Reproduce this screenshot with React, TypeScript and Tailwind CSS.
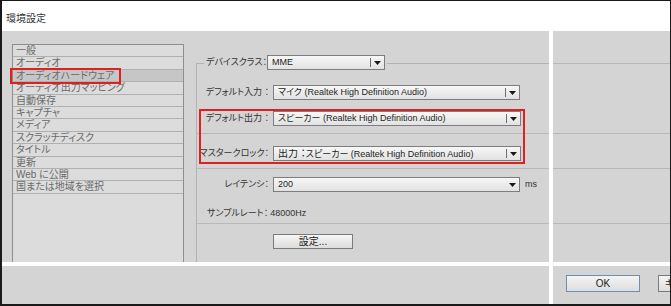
import React from "react";

const jp = "font-['Liberation_Sans','Noto_Sans_CJK_JP',sans-serif] [font-feature-settings:'palt']";

function Arrow() {
  return (
    <svg width="7" height="4" viewBox="0 0 7 4" className="block">
      <path d="M0 0 H7 L3.5 4 Z" fill="#1a1a1a" />
    </svg>
  );
}

function Dropdown({ text, w, divider = true }: { text: React.ReactNode; w: string; divider?: boolean }) {
  return (
    <div
      className={`${w} shrink-0 h-[15px] flex items-center border border-[#7d7d7d] bg-gradient-to-b from-[#f7f7f7] to-[#e2e2e2] text-[9px] leading-none text-[#1e1e1e] whitespace-nowrap overflow-hidden`}
    >
      <div className="flex-1 pl-[4px] overflow-hidden">{text}</div>
      {divider ? <div className="w-px h-[9px] bg-[#6e6e6e]" /> : null}
      <div className="w-[13px] flex items-center justify-center">
        <Arrow />
      </div>
    </div>
  );
}

function Label({ children }: { children: React.ReactNode }) {
  return (
    <div className="w-[76px] shrink-0 pr-[4px] text-right text-[9px] leading-none text-[#333] whitespace-nowrap">{children}</div>
  );
}

const items = [
  "一般",
  "オーディオ",
  "オーディオハードウェア",
  "オーディオ出力マッピング",
  "自動保存",
  "キャプチャ",
  "メディア",
  "スクラッチディスク",
  "タイトル",
  "更新",
  "Web に公開",
  "国または地域を選択",
];

export default function App() {
  return (
    <div className={`w-[671px] h-[306px] border-t border-l-2 border-r border-b-2 border-[#1a1a1a] bg-white flex flex-col overflow-hidden ${jp}`}>
      {/* title */}
      <div className="h-[30px] flex items-center pl-[4px] pt-[5px] text-[10px] text-[#333] leading-none">環境設定</div>

      {/* middle */}
      <div className="h-[231px] flex">
        <div className="w-[547px] bg-[#d4d4d4] flex pl-[10px] pt-[13px]">
          {/* list */}
          <div className="relative w-[172px] border border-b-0 border-[#8e8e8e] bg-[#dcdcdc]">
            {items.map((it, i) => (
              <div
                key={it}
                className={`h-[12.4px] border-b border-[#b0b0b0] pl-[3px] text-[10px] leading-[11px] text-[#6a6a6a] whitespace-nowrap overflow-hidden ${i === 2 ? "bg-[#c6c6c6]" : ""}`}
              >
                {it}
              </div>
            ))}
            <div className="absolute left-[-3px] top-[23px] w-[111px] h-[16px] border-2 border-[#e0201e]" />
          </div>

          {/* group */}
          <div className="relative ml-[12px] flex-1 flex flex-col">
            <div className="mt-[11px] h-[15px] flex">
              <div className="self-end h-[7px] w-[8px] shrink-0 border-l border-t border-[#b2b2b2]" />
              <div className="ml-[2px] w-[61px] shrink-0 flex items-center text-[9px] leading-none text-[#333] whitespace-nowrap">デバイスクラス：</div>
              <Dropdown w="w-[118px]" text="MME" />
              <div className="self-end ml-[2px] h-[7px] flex-1 border-t border-[#b2b2b2]" />
            </div>
            <div className="flex-1 border-l border-[#b2b2b2] flex flex-col">
              <div className="mt-[15px] h-[15px] flex items-center">
                <Label>デフォルト入力 ：</Label>
                <Dropdown w="w-[247px]" text={<>マイク (Realtek High Definition Audio)</>} />
              </div>
              <div className="mt-[11px] h-[15px] flex items-center">
                <Label>デフォルト出力 ：</Label>
                <Dropdown w="w-[248px]" text={<>スピーカー (Realtek High Definition Audio)</>} />
              </div>
              <div className="mt-[7px] h-px bg-[#b8b8b8]" />
              <div className="mt-[12px] h-[15px] flex items-center">
                <Label>マスタークロック：</Label>
                <Dropdown w="w-[248px]" text={<><span className="text-[10px]">出力 ：</span>スピーカー (Realtek High Definition Audio)</>} />
              </div>
              <div className="mt-[7px] h-px bg-[#b8b8b8]" />
              <div className="mt-[8px] h-[15px] flex items-center">
                <Label>レイテンシ：</Label>
                <Dropdown w="w-[247px]" text="200" divider={false} />
                <div className="ml-[5px] text-[9px] leading-none text-[#333]">ms</div>
              </div>
              <div className="mt-[14px] h-[14px] flex items-center pl-[10px] text-[9px] leading-none text-[#333] whitespace-nowrap">
                サンプルレート：<span className="ml-[2px]">48000Hz</span>
              </div>
              <div className="mt-[3px] h-px bg-[#b8b8b8]" />
              <div className="mt-[10px] ml-[76px] w-[80px] h-[15px] flex items-center justify-center border border-[#7a7a7a] bg-gradient-to-b from-[#f6f6f6] to-[#dcdcdc] text-[10px] leading-none text-[#222]">
                設定...
              </div>
            </div>
            <div className="absolute left-[3px] top-[65px] w-[326px] h-[55px] border-2 border-[#e0201e]" />
          </div>
        </div>
        <div className="w-[4px] bg-white" />
        <div className="flex-1 bg-[#d4d4d4] flex flex-col">
          <div className="mt-[32px] h-px bg-[#b8b8b8]" />
          <div className="mt-[69px] h-px bg-[#b8b8b8]" />
          <div className="mt-[34px] h-px bg-[#b8b8b8]" />
          <div className="mt-[54px] h-px bg-[#b8b8b8]" />
        </div>
      </div>

      <div className="h-[4px] bg-white" />

      {/* bottom */}
      <div className="h-[38px] flex">
        <div className="w-[547px] bg-[#d4d4d4]" />
        <div className="w-[4px] bg-white" />
        <div className="flex-1 bg-[#d4d4d4] flex pt-[9px] pl-[13px] gap-[18px] overflow-hidden">
          <div className="shrink-0 w-[74px] h-[17px] flex items-center justify-center border border-[#6f8fb0] bg-gradient-to-b from-[#f4f4f4] to-[#dedede] text-[10px] leading-none text-[#222]">
            OK
          </div>
          <div className="shrink-0 w-[74px] h-[17px] flex items-center justify-start pl-[6px] border border-[#7a7a7a] bg-gradient-to-b from-[#f4f4f4] to-[#dedede] text-[10px] leading-none text-[#222]">
            キャンセル
          </div>
        </div>
      </div>
    </div>
  );
}
